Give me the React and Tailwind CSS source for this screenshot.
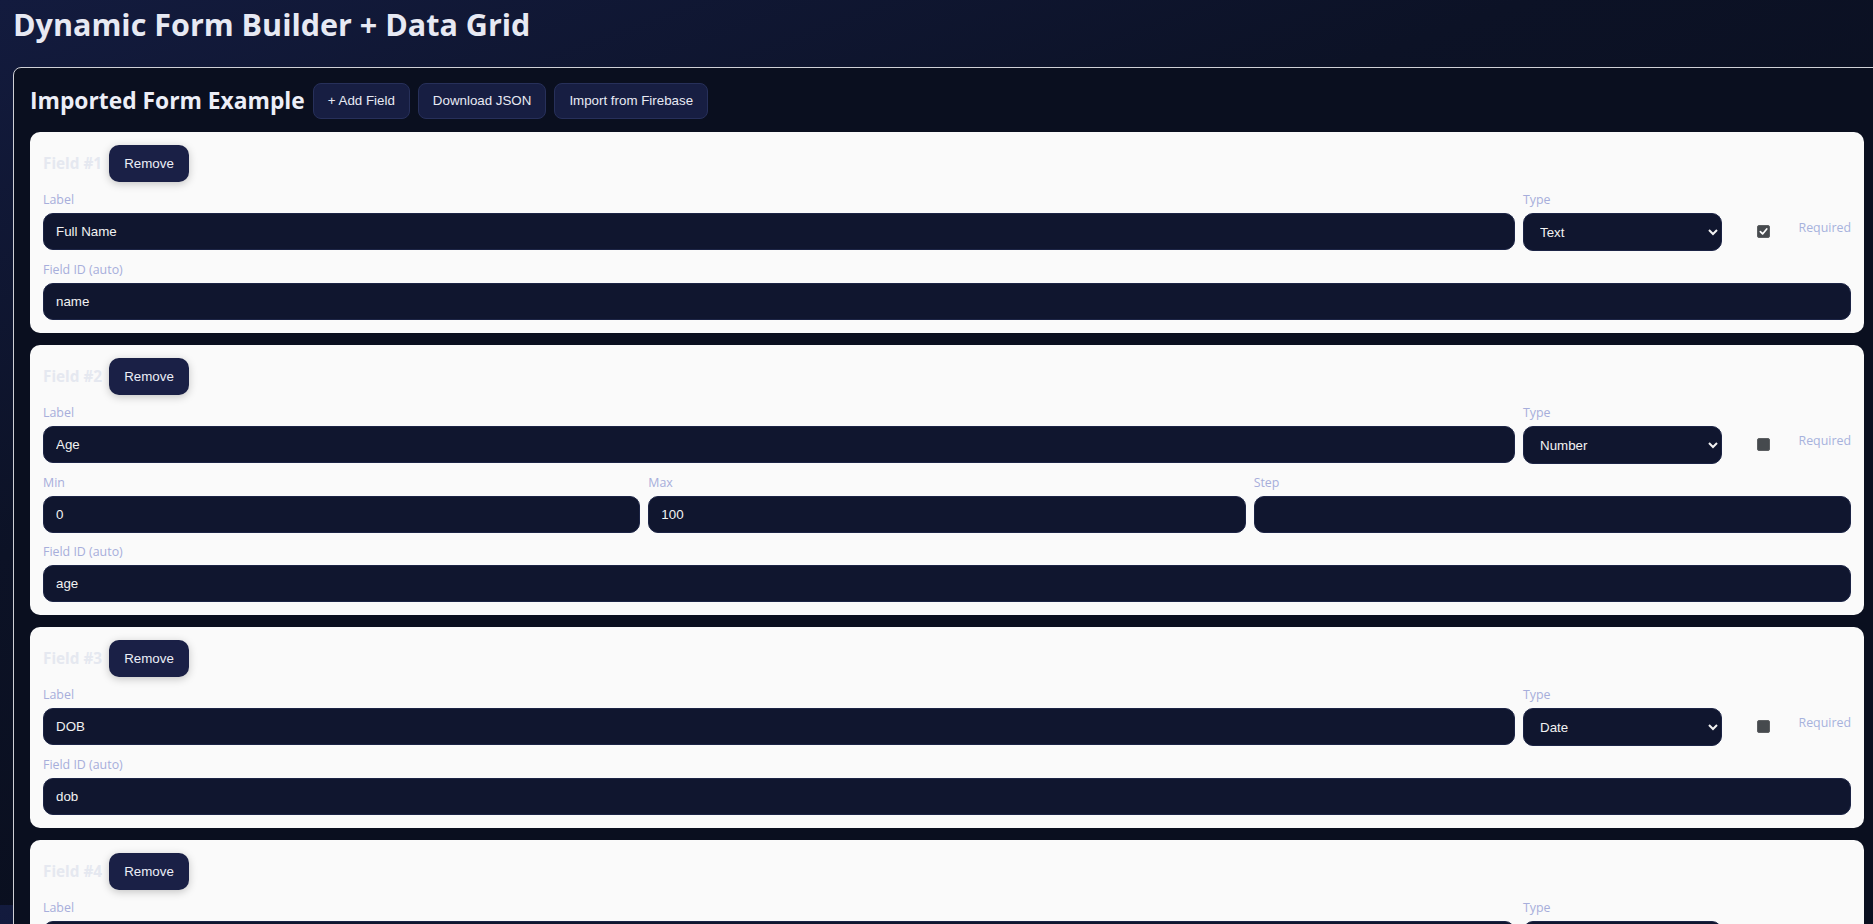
import React from "react";

const SANS = { fontFamily: '"Open Sans", "Noto Sans", sans-serif' };
const ARIAL = { fontFamily: '"Liberation Sans", Arial, sans-serif' };

function Label({ children }) {
  return (
    <div className="text-[12.4px] leading-[17px] mb-[5px] text-[#a7aedb]" style={SANS}>
      {children}
    </div>
  );
}

function TextInput({ value }) {
  return (
    <input
      readOnly
      value={value}
      className="block w-full h-[37px] rounded-[10px] border border-[#1c2445] bg-[#10162f] px-[12px] text-[13.33px] text-[#f2f2f2] outline-none"
      style={ARIAL}
    />
  );
}

function Select({ value }) {
  return (
    <select
      value={value}
      onChange={() => {}}
      className="block w-full h-[38px] rounded-[10px] border border-[#1c2445] bg-[#10162f] pl-[12px] pr-[8px] text-[13.33px] text-[#f2f2f2] outline-none"
      style={ARIAL}
    >
      <option>Text</option>
      <option>Number</option>
      <option>Date</option>
      <option>Select</option>
    </select>
  );
}

function Checkbox({ checked }) {
  return (
    <span className="flex h-[13px] w-[13px] items-center justify-center rounded-[2px] border border-[#5c5f62] bg-[#464a4e]">
      {checked && (
        <svg width="9" height="9" viewBox="0 0 10 10">
          <path d="M1.5 5.2 L4 7.7 L8.6 2.2" fill="none" stroke="#ffffff" strokeWidth="1.9" strokeLinecap="round" strokeLinejoin="round" />
        </svg>
      )}
    </span>
  );
}

function FieldCard({ n, label, type, required, id, numeric }) {
  return (
    <div className="rounded-[10px] bg-[#fafafa] p-[13px]">
      <div className="flex h-[37px] items-center gap-[7px] mb-[9px]">
        <span className="text-[15.3px] font-bold text-[#e5e8f0]" style={SANS}>
          Field #{n}
        </span>
        <button
          className="h-[37px] w-[80px] rounded-[10px] bg-[#1a2046] text-[13.33px] text-[#eceef7] shadow-[0_2px_8px_rgba(0,0,0,0.22)]"
          style={ARIAL}
        >
          Remove
        </button>
      </div>
      <div className="grid grid-cols-[1fr_199px_121px] gap-x-2">
        <div>
          <Label>Label</Label>
          <TextInput value={label} />
        </div>
        <div>
          <Label>Type</Label>
          <Select value={type} />
        </div>
        <div className="flex items-start">
          <span className="ml-[27px] mt-[34px]">
            <Checkbox checked={required} />
          </span>
          <span className="ml-auto mt-[28px] text-[12.4px] leading-[17px] text-[#a7b2dd]" style={SANS}>
            Required
          </span>
        </div>
      </div>
      {numeric && (
        <div className="mt-[10px] grid grid-cols-3 gap-x-2">
          <div>
            <Label>Min</Label>
            <TextInput value={numeric.min} />
          </div>
          <div>
            <Label>Max</Label>
            <TextInput value={numeric.max} />
          </div>
          <div>
            <Label>Step</Label>
            <TextInput value={numeric.step} />
          </div>
        </div>
      )}
      <div className="mt-[10px]">
        <Label>Field ID (auto)</Label>
        <TextInput value={id} />
      </div>
    </div>
  );
}

function TopButton({ children }) {
  return (
    <button
      className="h-[36px] rounded-[8px] border border-[#27305a] bg-[#171e42] px-[14px] text-[13.33px] text-[#e8eaf4]"
      style={ARIAL}
    >
      {children}
    </button>
  );
}

export default function App() {
  const fields = [
    { n: 1, label: "Full Name", type: "Text", required: true, id: "name" },
    { n: 2, label: "Age", type: "Number", required: false, id: "age", numeric: { min: "0", max: "100", step: "" } },
    { n: 3, label: "DOB", type: "Date", required: false, id: "dob" },
    { n: 4, label: "Gender", type: "Select", required: false, id: "gender" },
  ];
  return (
    <div className="w-full min-h-screen overflow-hidden bg-[#0a0f1f] bg-[linear-gradient(160deg,#131b3e_0%,#0c1226_35%,#0a0f1f_60%,#0a0f1f_100%)] bg-[length:100%_905px] bg-repeat">
      <div className="pl-[13px] pt-[4px] pb-6">
        <h1 className="m-0 text-[30.5px] leading-[40px] font-bold text-[#e7e9f3]" style={SANS}>
          Dynamic Form Builder + Data Grid
        </h1>
        <div className="mt-[23px] w-[1868px] rounded-tl-[8px] rounded-tr-[8px] border border-[#cfd0d6] bg-[#0a0f1f] px-[16px] pt-[15px] pb-4">
          <div className="flex items-center gap-2">
            <h2 className="m-0 text-[22.8px] font-bold text-[#eceef7]" style={SANS}>
              Imported Form Example
            </h2>
            <TopButton>+ Add Field</TopButton>
            <TopButton>Download JSON</TopButton>
            <TopButton>Import from Firebase</TopButton>
          </div>
          <div className="mt-[13px] flex flex-col gap-[12px]">
            {fields.map((f) => (
              <FieldCard key={f.n} {...f} />
            ))}
          </div>
        </div>
      </div>
    </div>
  );
}
